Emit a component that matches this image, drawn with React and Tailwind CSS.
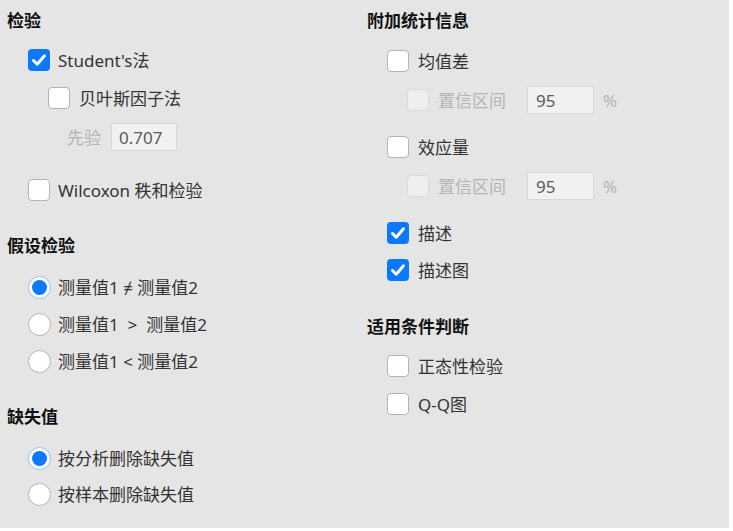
import React from "react";

const FONT = { fontFamily: '"Noto Sans", "Noto Sans CJK SC", sans-serif' };

function Check({ checked, disabled }) {
  if (checked) {
    return (
      <span className="flex h-[22px] w-[22px] shrink-0 items-center justify-center rounded-[4px] bg-[#0a78ff]">
        <svg width="18" height="18" viewBox="0 0 18 18">
          <path d="M3.5 9.5 L7.2 13.2 L14.5 4.8" fill="none" stroke="white" strokeWidth="3" strokeLinecap="round" strokeLinejoin="round" />
        </svg>
      </span>
    );
  }
  return (
    <span
      className={
        disabled
          ? "h-[22px] w-[22px] shrink-0 rounded-[4px] border border-[#dadada] bg-[#efefef]"
          : "h-[22px] w-[22px] shrink-0 rounded-[4px] border border-[#b3b3b3] bg-white"
      }
    />
  );
}

function Radio({ checked }) {
  if (checked) {
    return (
      <span className="flex h-[23px] w-[23px] shrink-0 items-center justify-center rounded-full border border-[#8fc0ff] bg-white">
        <span className="h-[15px] w-[15px] rounded-full bg-[#0a78ff]" />
      </span>
    );
  }
  return <span className="h-[23px] w-[23px] shrink-0 rounded-full border border-[#b3b3b3] bg-white" />;
}

function Heading({ children, className = "" }) {
  return (
    <div className={"flex h-[24px] items-center text-[17px] font-bold leading-none text-[#111] " + className}>
      {children}
    </div>
  );
}

function Row({ className = "", children }) {
  return <div className={"flex h-[30px] items-center text-[17px] leading-none text-[#333] " + className}>{children}</div>;
}

export default function App() {
  return (
    <div className="h-[531px] w-[733px] bg-white" style={FONT}>
      <div className="flex h-[528px] w-[729px] bg-[#e5e5e5]">
        {/* Left column */}
        <div className="flex w-[367px] flex-col pl-[7px] pt-[8px]">
          <Heading>检验</Heading>
          <Row className="mt-[13px] pl-[21px]">
            <Check checked />
            <span className="ml-[8px]">Student's法</span>
          </Row>
          <Row className="mt-[8px] pl-[41px]">
            <Check />
            <span className="ml-[9px]">贝叶斯因子法</span>
          </Row>
          <Row className="mt-[9px] pl-[60px]">
            <span className="text-[#b4b4b4]">先验</span>
            <span className="ml-[10px] flex h-[28px] w-[66px] items-center rounded-[2px] border border-[#d6d6d6] bg-[#f1f1f1] pl-[7px] text-[#5a5a5a]">
              0.707
            </span>
          </Row>
          <Row className="mt-[23px] pl-[21px]">
            <Check />
            <span className="ml-[8px]">Wilcoxon 秩和检验</span>
          </Row>

          <Heading className="mt-[28px]">假设检验</Heading>
          <Row className="mt-[15px] pl-[21px]">
            <Radio checked />
            <span className="ml-[7px] whitespace-pre">测量值1 ≠ 测量值2</span>
          </Row>
          <Row className="mt-[7px] pl-[21px]">
            <Radio />
            <span className="ml-[7px] whitespace-pre">测量值1  &gt;  测量值2</span>
          </Row>
          <Row className="mt-[7px] pl-[21px]">
            <Radio />
            <span className="ml-[7px] whitespace-pre">测量值1 &lt; 测量值2</span>
          </Row>

          <Heading className="mt-[28px]">缺失值</Heading>
          <Row className="mt-[15px] pl-[21px]">
            <Radio checked />
            <span className="ml-[7px]">按分析删除缺失值</span>
          </Row>
          <Row className="mt-[6px] pl-[21px]">
            <Radio />
            <span className="ml-[7px]">按样本删除缺失值</span>
          </Row>
        </div>

        {/* Right column */}
        <div className="flex flex-1 flex-col pt-[8px]">
          <Heading>附加统计信息</Heading>
          <Row className="mt-[14px] pl-[20px]">
            <Check />
            <span className="ml-[9px]">均值差</span>
          </Row>
          <Row className="mt-[9px] pl-[40px]">
            <Check disabled />
            <span className="ml-[9px] w-[89px] text-[#b4b4b4]">置信区间</span>
            <span className="flex h-[28px] w-[67px] items-center rounded-[2px] border border-[#d6d6d6] bg-[#f1f1f1] pl-[8px] text-[#5a5a5a]">
              95
            </span>
            <span className="ml-[9px] text-[#b4b4b4]">%</span>
          </Row>
          <Row className="mt-[17px] pl-[20px]">
            <Check />
            <span className="ml-[9px]">效应量</span>
          </Row>
          <Row className="mt-[9px] pl-[40px]">
            <Check disabled />
            <span className="ml-[9px] w-[89px] text-[#b4b4b4]">置信区间</span>
            <span className="flex h-[28px] w-[67px] items-center rounded-[2px] border border-[#d6d6d6] bg-[#f1f1f1] pl-[8px] text-[#5a5a5a]">
              95
            </span>
            <span className="ml-[9px] text-[#b4b4b4]">%</span>
          </Row>
          <Row className="mt-[17px] pl-[20px]">
            <Check checked />
            <span className="ml-[9px]">描述</span>
          </Row>
          <Row className="mt-[7px] pl-[20px]">
            <Check checked />
            <span className="ml-[9px]">描述图</span>
          </Row>

          <Heading className="mt-[29px]">适用条件判断</Heading>
          <Row className="mt-[13px] pl-[20px]">
            <Check />
            <span className="ml-[9px]">正态性检验</span>
          </Row>
          <Row className="mt-[8px] pl-[20px]">
            <Check />
            <span className="ml-[9px]">Q-Q图</span>
          </Row>
        </div>
      </div>
    </div>
  );
}
